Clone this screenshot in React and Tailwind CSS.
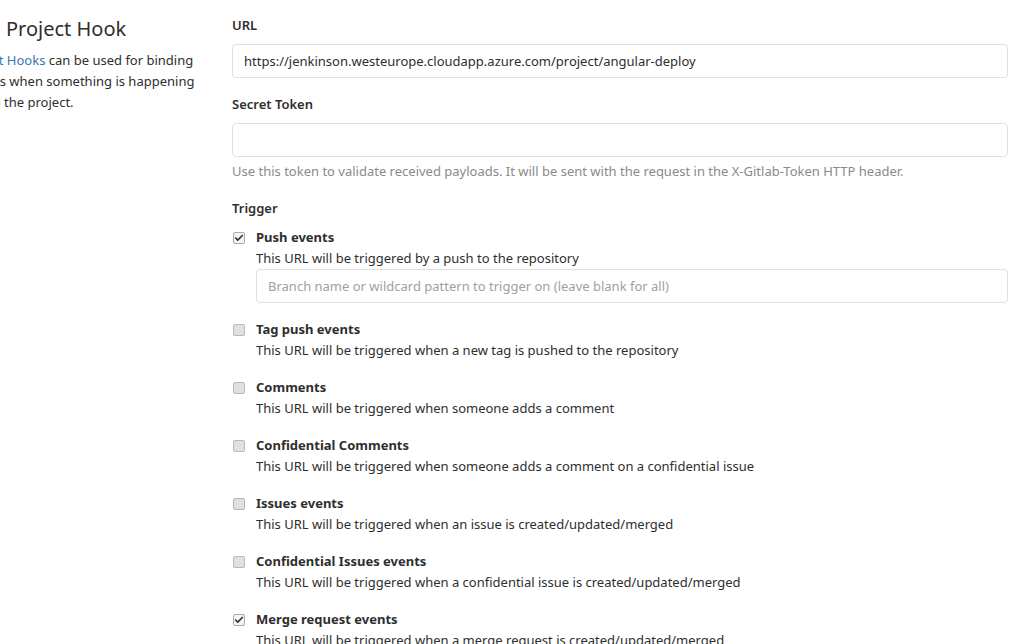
import { Check } from 'lucide-react';

const triggers = [
    { name: 'Push events', desc: 'This URL will be triggered by a push to the repository', checked: true, branch: true },
    { name: 'Tag push events', desc: 'This URL will be triggered when a new tag is pushed to the repository' },
    { name: 'Comments', desc: 'This URL will be triggered when someone adds a comment' },
    { name: 'Confidential Comments', desc: 'This URL will be triggered when someone adds a comment on a confidential issue' },
    { name: 'Issues events', desc: 'This URL will be triggered when an issue is created/updated/merged' },
    { name: 'Confidential Issues events', desc: 'This URL will be triggered when a confidential issue is created/updated/merged' },
    { name: 'Merge request events', desc: 'This URL will be triggered when a merge request is created/updated/merged', checked: true },
];

function Checkbox({ checked }) {
    return (
        <span
            className={
                'mt-[5px] w-[12px] h-[12px] shrink-0 rounded-[2px] border flex items-center justify-center ' +
                (checked ? 'border-[#a9a9a9] bg-[#f4f4f4]' : 'border-[#b8b8b8] bg-[#e0e0e0]')
            }
        >
            {checked && <Check className="w-[10px] h-[10px] text-[#333]" strokeWidth={4} />}
        </span>
    );
}

export default function App() {
    return (
        <div className="flex w-[1017px] h-[644px] overflow-hidden bg-white text-[13px] leading-[21px] text-[#2e2e2e] font-['Noto_Sans',sans-serif]">
            <div className="w-[232px] shrink-0 overflow-hidden pt-[15px]">
                <h4 className="pl-[6px] text-[20px] leading-[28px] font-normal whitespace-nowrap mb-[7px]">Project Hook</h4>
                <p className="whitespace-nowrap">
                    <span className="block -ml-[39px]">
                        <a className="text-[#3777b0]">Project Hooks</a> can be used for binding
                    </span>
                    <span className="block -ml-[34px]">events when something is happening</span>
                    <span className="block -ml-[37px]">within the project.</span>
                </p>
            </div>

            <div className="flex-1 pt-[15px] pr-[9px]">
                <label className="block font-semibold mb-[8px]">URL</label>
                <div className="h-[34px] rounded border border-[#e0e0e0] px-[11px] flex items-center">
                    https://jenkinson.westeurope.cloudapp.azure.com/project/angular-deploy
                </div>

                <label className="block font-semibold mt-[16px] mb-[8px]">Secret Token</label>
                <div className="h-[34px] rounded border border-[#e0e0e0]"></div>
                <p className="mt-[4px] text-[#8a8a8a]">
                    Use this token to validate received payloads. It will be sent with the request in the X-Gitlab-Token HTTP header.
                </p>

                <label className="block font-semibold mt-[16px] mb-[8px]">Trigger</label>
                <div className="flex flex-col gap-[16px]">
                    {triggers.map((t) => (
                        <div key={t.name} className="flex gap-[11px] pl-[1px]">
                            <Checkbox checked={t.checked} />
                            <div className="flex-1">
                                <div className="font-bold">{t.name}</div>
                                <div>{t.desc}</div>
                                {t.branch && (
                                    <div className="h-[34px] rounded border border-[#e0e0e0] px-[11px] flex items-center text-[#a0a0a0]">
                                        Branch name or wildcard pattern to trigger on (leave blank for all)
                                    </div>
                                )}
                            </div>
                        </div>
                    ))}
                </div>
            </div>
        </div>
    );
}
